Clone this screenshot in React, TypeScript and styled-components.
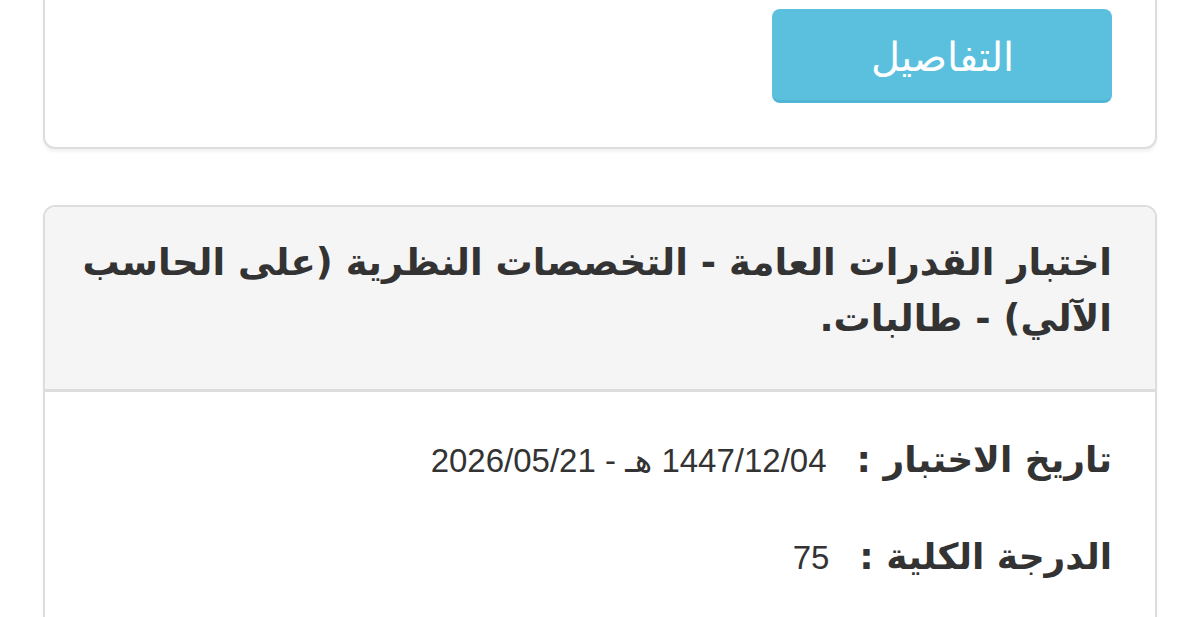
import styled, { createGlobalStyle } from "styled-components"

const GlobalStyle = createGlobalStyle`
  html, body {
    margin: 0;
    padding: 0;
    background: #fff;
    overflow: hidden;
  }
  body {
    font-family: "Liberation Sans", "DejaVu Sans", sans-serif;
    color: #333;
  }
`

const exam = {
  title: "اختبار القدرات العامة - التخصصات النظرية (على الحاسب الآلي) - طالبات.",
  rows: [
    { label: "تاريخ الاختبار", value: "1447/12/04 هـ - 2026/05/21" },
    { label: "الدرجة الكلية", value: "75" },
  ],
}

const App = () => {
  return (
    <Page dir="rtl">
      <GlobalStyle />
      <Panel>
        <PanelBody>
          <DetailsButton>التفاصيل</DetailsButton>
        </PanelBody>
      </Panel>

      <Panel>
        <PanelHeading>
          <PanelTitle>{exam.title}</PanelTitle>
        </PanelHeading>
        <ResultBody>
          {exam.rows.map((row, i) => (
            <InfoRow key={i}>
              <InfoLabel>{row.label} :</InfoLabel>
              <InfoValue dir="rtl">{row.value}</InfoValue>
            </InfoRow>
          ))}
        </ResultBody>
      </Panel>
    </Page>
  )
}

const Page = styled.div`
  display: flex;
  flex-direction: column;
  gap: 56px;
  padding: 0 43px;
  margin-top: -37px;
`

const Panel = styled.div`
  background: #fff;
  border: 2px solid #ddd;
  border-radius: 12px;
  box-shadow: 0 3px 3px rgba(0, 0, 0, 0.05);
  overflow: hidden;
`

const PanelBody = styled.div`
  padding: 44px 43px;
  display: flex;
`

const DetailsButton = styled.button`
  width: 340px;
  height: 94px;
  background: #5bc0de;
  border: none;
  border-bottom: 3px solid #4fb6d6;
  border-radius: 8px;
  color: #fff;
  font-family: "DejaVu Sans", sans-serif;
  font-size: 40px;
  font-weight: 300;
  cursor: pointer;
  padding: 4px 0 0;
`

const PanelHeading = styled.div`
  background: #f5f5f5;
  border-bottom: 3px solid #ddd;
  padding: 28px 43px 42px 30px;
`

const PanelTitle = styled.h3`
  margin: 0;
  font-family: "DejaVu Sans", sans-serif;
  font-size: 37px;
  font-weight: bold;
  line-height: 56px;
  color: #333;
`

const ResultBody = styled.div`
  padding: 47px 43px 80px;
  display: flex;
  flex-direction: column;
  gap: 49px;
`

const InfoRow = styled.div`
  display: flex;
  align-items: baseline;
  gap: 30px;
  height: 48px;
`

const InfoLabel = styled.span`
  font-family: "DejaVu Sans", sans-serif;
  font-size: 36px;
  font-weight: bold;
  color: #333;
`

const InfoValue = styled.span`
  font-family: "Liberation Sans", "DejaVu Sans", sans-serif;
  font-size: 33px;
  color: #333;
`

export default App
